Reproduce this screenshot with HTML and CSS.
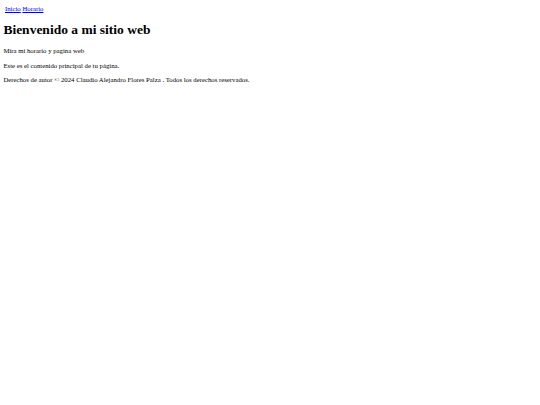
FILE: index.html
```html
<!DOCTYPE html>
<html lang="es">
<head>
<meta charset="utf-8">
<title>Mi sitio web</title>
<link rel="stylesheet" href="styles.css">
</head>
<body>
<header class="site-header">
<nav class="nav">
<a href="#" class="nav-link">Inicio</a>
<a href="#" class="nav-link">Horario</a>
</nav>
<h1 class="title">Bienvenido a mi sitio web</h1>
</header>
<main class="content">
<p class="text">Mira mi horario y pagina web</p>
<p class="text">Este es el contenido principal de tu página.</p>
</main>
<footer class="footer">
<p class="text">Derechos de autor © 2024 Claudio Alejandro Flores Palza . Todos los derechos reservados.</p>
</footer>
</body>
</html>
```
FILE: styles.css
```css
html {
  background: #ffffff;
}
body {
  margin: 5.2px 3.375px 3.375px;
  font-family: "Liberation Serif", "Times New Roman", serif;
  font-size: 6.75px;
  line-height: 7.75px;
  color: #000000;
}
.nav {
  padding-left: 1.6px;
}
.nav-link {
  color: #0000ee;
  text-decoration: underline;
}
.title {
  font-size: 13.5px;
  line-height: 15.6px;
  font-weight: bold;
  margin: 9.05px 0 9.6px;
}
.text {
  margin: 6.9px 0;
}
```
